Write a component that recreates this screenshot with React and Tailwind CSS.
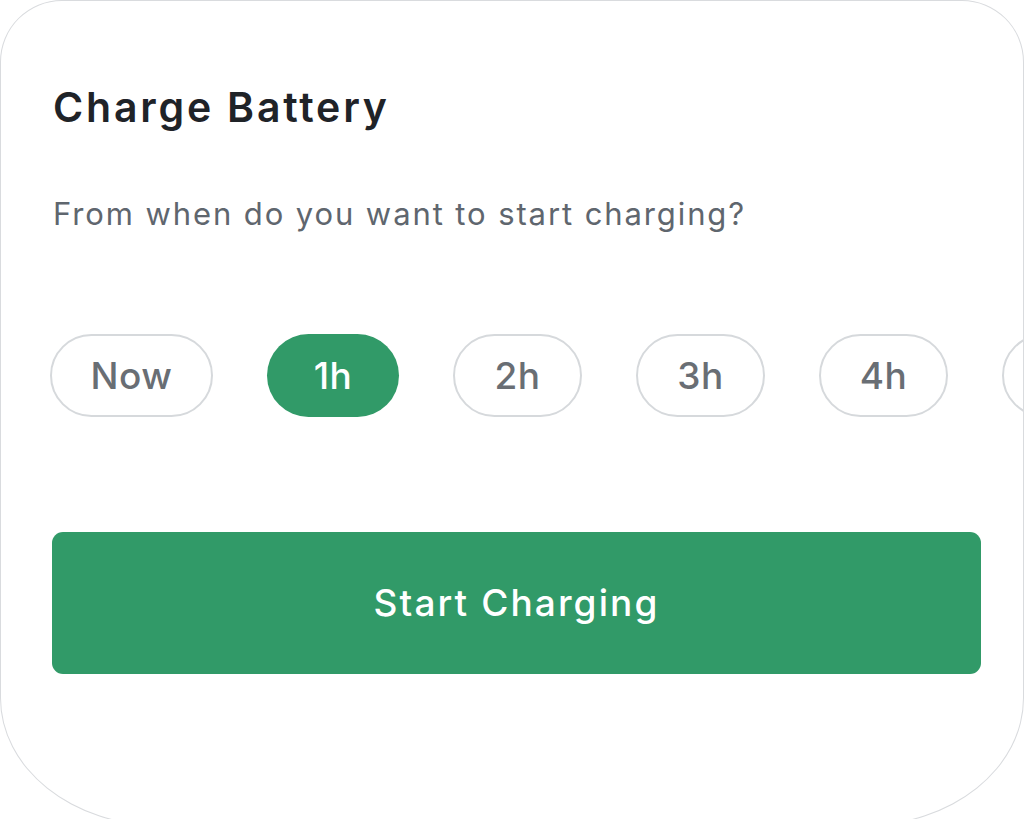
import React from "react";

const options = [
  { label: "Now", w: "w-[163px]", active: false },
  { label: "1h", w: "w-[132px]", active: true },
  { label: "2h", w: "w-[129px]", active: false },
  { label: "3h", w: "w-[129px]", active: false },
  { label: "4h", w: "w-[129px]", active: false },
  { label: "5h", w: "w-[129px]", active: false },
];

export default function App() {
  return (
    <div className="w-full h-[819px] bg-white overflow-hidden" style={{ fontFamily: "Inter, 'Noto Sans', sans-serif" }}>
      <div className="w-[1024px] h-[826px] bg-white border border-[#d9dbde] rounded-tl-[62px] rounded-tr-[62px] rounded-bl-[160px_128px] rounded-br-[160px_128px] overflow-hidden pt-[82px]">
        <h1 className="pl-[52px] text-[41px] leading-[48px] font-semibold tracking-[2.8px] text-[#1f2328]">
          Charge Battery
        </h1>
        <p className="pl-[52px] mt-[65px] text-[31px] leading-[36px] tracking-[1.9px] text-[#5f666e]">
          From when do you want to start charging?
        </p>
        <div className="flex gap-[54px] pl-[49px] mt-[102px] whitespace-nowrap">
          {options.map((o) => (
            <div
              key={o.label}
              className={
                o.active
                  ? `${o.w} h-[83px] shrink-0 rounded-full bg-[#319a68] flex items-center justify-center text-[37px] tracking-[0.5px] font-medium text-white`
                  : `${o.w} h-[83px] shrink-0 rounded-full border-2 border-[#d6d9dc] flex items-center justify-center text-[37px] tracking-[0.5px] font-medium text-[#696e74]`
              }
            >
              {o.label}
            </div>
          ))}
        </div>
        <div className="px-[51px] mt-[115px]">
          <button className="w-[929px] h-[142px] rounded-[11px] bg-[#319a68] flex items-center justify-center text-[37px] tracking-[2.1px] font-medium text-white">
            Start Charging
          </button>
        </div>
      </div>
    </div>
  );
}
